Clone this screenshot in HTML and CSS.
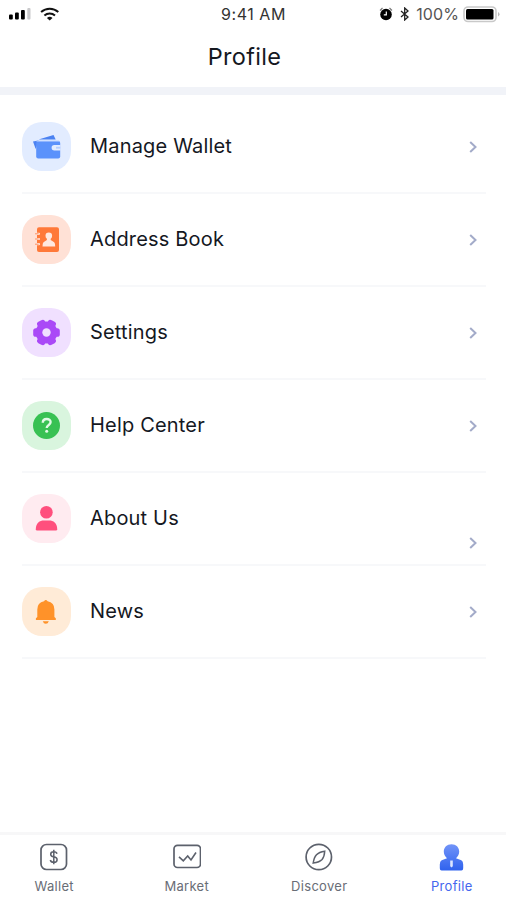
FILE: index.html
```html
<!DOCTYPE html>
<html lang="en">
<head>
<meta charset="utf-8">
<title>Profile</title>
<link rel="stylesheet" href="styles.css">
</head>
<body>
<div class="screen">
  <div class="status">
    <div class="status-left">
      <svg width="22" height="12" viewBox="0 0 22 12"><rect x="0" y="6.5" width="3.8" height="5" rx="1"/><rect x="6" y="4.5" width="3.8" height="7" rx="1"/><rect x="12" y="2" width="3.8" height="9.5" rx="1"/><rect x="18.3" y="0" width="3.2" height="11.5" rx="1" fill="#c9c9cb"/></svg>
      <svg width="20" height="14" viewBox="0 0 20 14" fill="none" stroke="#111" stroke-width="2"><path d="M1.1 5.1a13 13 0 0 1 17.2 0M4.4 8.4a8 8 0 0 1 10.6 0"/><path d="M9.7 13.5 6.9 10.9a4.2 4.2 0 0 1 5.6 0z" fill="#111" stroke="none"/></svg>
    </div>
    <span class="time">9:41 AM</span>
    <div class="status-right">
      <svg width="14" height="14" viewBox="0 0 14 14"><circle cx="7" cy="7.5" r="5.8"/><path d="M1 3.5 3.5 1M10.5 1 13 3.5" stroke="#777" stroke-width="1.1"/><path d="M7.3 4.5v3.4H4.8" fill="none" stroke="#fff" stroke-width="1.2"/></svg>
      <svg class="bluetooth" width="10" height="14" viewBox="0 0 10 14" fill="none" stroke="#222" stroke-width="1.3"><path d="m1 4 7 6-3.3 3V1L8 4l-7 6"/></svg>
      <span class="percent">100%</span>
      <svg class="battery" width="37" height="17" viewBox="0 0 37 17"><rect x="1" y="1" width="32" height="14.5" rx="4" fill="#fff" stroke="#c9c9c9" stroke-width="1.6"/><rect x="3" y="3" width="27.5" height="10.5" rx="1.5"/><path d="M35 6v4.5q1.5-.7 1.5-2.2T35 6z" fill="#bbb"/></svg>
    </div>
  </div>
  <h1 class="title">Profile</h1>
  <main class="list">
    <div class="row">
      <div class="tile blue"><svg width="49" height="49" viewBox="0 0 49 49"><path d="m11 19.5 5.5-1-2.8 8.5zM17.3 17.2 31.5 13l2.2 4.5H17z" fill="#4b82f2"/><rect x="14.2" y="19" width="24" height="17.5" rx="2" fill="#5b92fb"/><path d="M38.5 23H32.3a2.7 2.7 0 0 0 0 5.4h6.2" fill="#e2ecff"/><path d="M38.3 24.8H34v1.8h4.3z" fill="#b5ceff"/><path d="M14.5 19.2H37" stroke="#a8c6ff"/></svg></div>
      <span class="label">Manage Wallet</span>
      <svg class="chevron" width="8" height="12" viewBox="0 0 8 12"><path d="m1.2 1 5.3 5-5.3 5"/></svg>
    </div>
    <div class="row">
      <div class="tile orange"><svg width="49" height="49" viewBox="0 0 49 49"><rect x="15" y="12.3" width="22" height="24.7" rx="2" fill="#ff7939"/><path d="M14 18.8h3M14 24h3M14 29.2h3" stroke="#ffe1d6" stroke-width="2.2" stroke-linecap="round"/><path d="M13 18.8h3.6M13 24h3.6M13 29.2h3.6" stroke="#ff9464" stroke-width="1"/><circle cx="26.8" cy="20.7" r="3.3" fill="#ffe8df"/><path d="M24.9 22h3.8v3l3.5 2.3q1 .8 1 4.2H20.5q0-3.4 1-4.2l3.4-2.3z" fill="#ffe8df"/></svg></div>
      <span class="label">Address Book</span>
      <svg class="chevron" width="8" height="12" viewBox="0 0 8 12"><path d="m1.2 1 5.3 5-5.3 5"/></svg>
    </div>
    <div class="row">
      <div class="tile purple"><svg width="49" height="49" viewBox="0 0 49 49"><g fill="#aa49f7"><circle cx="24.5" cy="24.5" r="10.9"/><rect x="11.2" y="20.2" width="26.6" height="8.6" rx="2.6"/><rect x="11.2" y="20.2" width="26.6" height="8.6" rx="2.6" transform="rotate(60 24.5 24.5)"/><rect x="11.2" y="20.2" width="26.6" height="8.6" rx="2.6" transform="rotate(120 24.5 24.5)"/></g><circle cx="24.5" cy="24.5" r="4.2" fill="#f0e0ff"/></svg></div>
      <span class="label">Settings</span>
      <svg class="chevron" width="8" height="12" viewBox="0 0 8 12"><path d="m1.2 1 5.3 5-5.3 5"/></svg>
    </div>
    <div class="row">
      <div class="tile green"><svg width="49" height="49" viewBox="0 0 49 49"><circle cx="24.5" cy="24.5" r="13.5" fill="#38c153"/><path d="M20.8 21.8c0-5 7.8-4.8 7.8-.7 0 3-3.9 2.7-3.9 6" fill="none" stroke="#e2fae6" stroke-width="2.4"/><circle cx="24.7" cy="30.3" r="1.5" fill="#e2fae6"/></svg></div>
      <span class="label">Help Center</span>
      <svg class="chevron" width="8" height="12" viewBox="0 0 8 12"><path d="m1.2 1 5.3 5-5.3 5"/></svg>
    </div>
    <div class="row">
      <div class="tile pink"><svg width="49" height="49" viewBox="0 0 49 49" fill="#ff4f7d"><circle cx="24.4" cy="18.2" r="6.3"/><path d="M13.8 35.2c0-6.2 4-8.7 8-8.7h5.4c4 0 8 2.5 8 8.7q0 1.3-1.3 1.3H15.1q-1.3 0-1.3-1.3z"/></svg></div>
      <span class="label">About Us</span>
      <svg class="chevron low" width="8" height="12" viewBox="0 0 8 12"><path d="m1.2 1 5.3 5-5.3 5"/></svg>
    </div>
    <div class="row">
      <div class="tile amber"><svg width="49" height="49" viewBox="0 0 49 49" fill="#ff9229"><path d="M22 14.3q1.8-2.8 3.6 0 6.8 1.3 6.8 8.2v7.6l1.4 1.2V33H13.9v-1.7l1.4-1.2v-7.6q0-6.9 6.7-8.2zM20.8 34.3h6q-.8 2.5-3 2.5t-3-2.5z"/></svg></div>
      <span class="label">News</span>
      <svg class="chevron" width="8" height="12" viewBox="0 0 8 12"><path d="m1.2 1 5.3 5-5.3 5"/></svg>
    </div>
  </main>
  <nav class="tabs">
    <div class="tab"><svg width="28" height="28" viewBox="0 0 28 28" fill="none" stroke="#5c616c" stroke-width="1.7"><rect x="1" y="1.5" width="25.5" height="25" rx="5.5"/><path d="M17 10.8q-.5-2-3.3-2-3 0-3 2.4 0 2.2 3 2.6 3.4.5 3.4 2.9 0 2.6-3.3 2.6-3 0-3.5-2.3M13.8 6.7v14.6" stroke-width="1.5"/></svg><span>Wallet</span></div>
    <div class="tab"><svg width="28" height="28" viewBox="0 0 28 28" fill="none" stroke="#5c616c" stroke-width="1.7"><rect x="1" y="2.3" width="26.5" height="22.2" rx="3.5"/><path d="m6 13.8 4.3 4 4.4-4.8 3.3 4 5-7.5" stroke-width="1.6"/></svg><span>Market</span></div>
    <div class="tab"><svg width="28" height="28" viewBox="0 0 28 28" fill="none" stroke="#5c616c" stroke-width="1.7"><circle cx="13.8" cy="14" r="12.7"/><path d="M19.7 8.2q-.3 5.5-2.6 8.2-2.4 2.6-8.9 3.7.8-5.8 3.3-8.4 2.6-2.7 8.2-3.5z" stroke-width="1.5"/></svg><span>Discover</span></div>
    <div class="tab active"><svg width="28" height="28" viewBox="0 0 28 28"><defs><linearGradient id="person" x2="0" y2="1"><stop stop-color="#7294f8"/><stop offset="1" stop-color="#2f62ee"/></linearGradient></defs><path d="M13.5 1.2c4.6 0 7.7 3.2 7.7 7.3 0 3-1.3 5-3.2 6.7l5.3 2.1q1.9 1 1.9 4.2v3.7q0 2.4-1.8 2.4H3.6q-1.8 0-1.8-2.4v-3.7q0-3.2 1.9-4.2L9 15.2c-1.9-1.7-3.2-3.7-3.2-6.7 0-4.1 3.1-7.3 7.7-7.3z" fill="url(#person)"/><path d="M12.2 17.5h2.6v5.7l-1.3 1.2-1.3-1.2z" fill="#dce6ff"/></svg><span>Profile</span></div>
  </nav>
</div>
</body>
</html>
```
FILE: styles.css
```css
* { box-sizing: border-box; }
body { margin: 0; background: #fff; font-family: Inter, "Liberation Sans", sans-serif; color: #15181f; }
svg { display: block; flex: none; }
.screen { width: 506px; height: 900px; display: flex; flex-direction: column; overflow: hidden; }
.status { height: 28px; display: grid; grid-template-columns: 1fr auto 1fr; align-items: center; padding: 0 6px 0 9px; }
.status-left { display: flex; gap: 9px; align-items: center; }
.time { font-size: 16px; letter-spacing: 0.55px; margin-right: 2px; color: #333; }
.status-right { display: flex; align-items: center; justify-content: flex-end; }
.bluetooth { margin-left: 7px; }
.percent { margin-left: 6px; font-size: 16px; letter-spacing: 0.1px; color: #555; }
.battery { margin-left: 4px; }
.title { margin: 0; height: 67px; border-bottom: 8px solid #f1f3f8; font-size: 23.5px; line-height: 58px; font-weight: 400; letter-spacing: 0.3px; text-align: center; padding-right: 17px; }
.list { flex: 1; padding: 6px 20px 0 22px; }
.row { height: 93px; display: flex; align-items: center; border-bottom: 2px solid #f7f8fa; padding-right: 9px; }
.tile { width: 49px; height: 49px; border-radius: 20px; }
.blue { background: #e2ecff; }
.orange { background: #ffe1d6; }
.purple { background: #f0e0ff; }
.green { background: #d9f5de; }
.pink { background: #ffebf0; }
.amber { background: #ffebd7; }
.label { flex: 1; margin-left: 19px; padding-bottom: 2px; font-size: 20px; letter-spacing: 0.18px; }
.chevron { fill: none; stroke: #a3abc9; stroke-width: 2; }
.low { align-self: flex-end; margin-bottom: 15px; }
.tabs { height: 68px; margin: 0 -12px; border-top: 3px solid #f7f7f8; display: grid; grid-template-columns: repeat(4, 1fr); }
.tab { display: flex; flex-direction: column; align-items: center; padding-top: 8px; font-size: 13px; letter-spacing: 0.3px; line-height: 16px; color: #696d76; }
.tab span { margin-top: 7px; }
.tab.active { color: #4466ee; }
```
